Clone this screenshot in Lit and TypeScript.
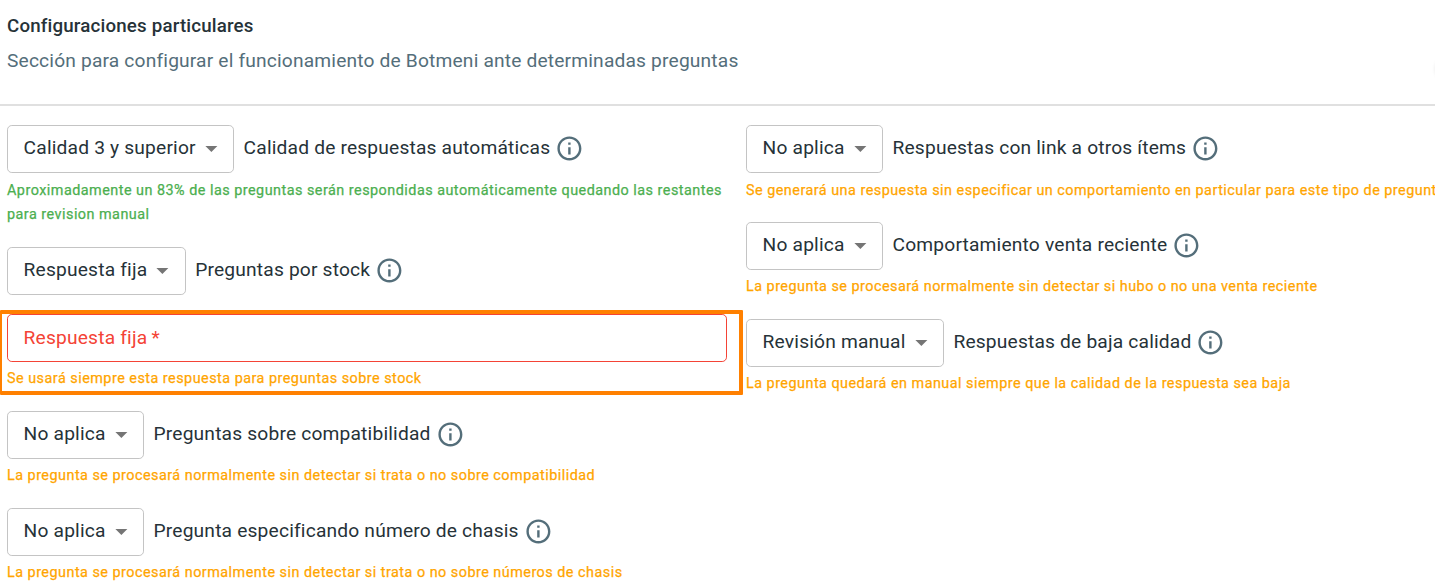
import { LitElement, html, css } from "lit";
import { customElement, property } from "lit/decorators.js";

@customElement("select-row")
class SelectRow extends LitElement {
  @property() value = "";
  @property() label = "";
  static styles = css`
    :host { display: flex; align-items: center; height: 48px; color: #263238; }
    .select {
      display: flex; align-items: center; box-sizing: border-box; height: 48px;
      border: 1px solid #c4c4c4; border-radius: 4.8px; padding: 0 7.6px 0 15.6px;
    }
    .text { line-height: 28.8px; margin-bottom: 1.6px; white-space: nowrap; }
    .arrow { width: 28.8px; height: 28.8px; margin: 0 0 1.5px 1.2px; fill: #757575; flex: none; }
    .label { margin-left: 9.3px; }
    .info { width: 28.8px; height: 28.8px; margin: 0 0 1.6px 5px; fill: #546e7a; flex: none; }
  `;
  render() {
    return html`
      <div class="select">
        <span class="text">${this.value}</span>
        <svg class="arrow" viewBox="0 0 24 24"><path d="M7 10l5 5 5-5z"></path></svg>
      </div>
      <span class="text label">${this.label}</span>
      <svg class="info" viewBox="0 0 24 24">
        <path d="M11 17h2v-6h-2v6zm1-15C6.48 2 2 6.48 2 12s4.48 10 10 10 10-4.48 10-10S17.52 2 12 2zm0 18c-4.41 0-8-3.59-8-8s3.59-8 8-8 8 3.59 8 8-3.59 8-8 8zM11 9h2V7h-2v2z"></path>
      </svg>
    `;
  }
}

@customElement("app-root")
class AppRoot extends LitElement {
  static styles = css`
    :host {
      display: block; box-sizing: border-box; width: 100%; height: 587px; overflow: hidden; position: relative;
      background: #fff; font-family: Roboto, sans-serif; font-size: 19.2px; letter-spacing: 0.18px;
    }
    .header { box-sizing: border-box; height: 106px; padding: 11px 7px 0; border-bottom: 2px solid #e0e0e0; }
    .title { font-size: 18.72px; font-weight: 500; line-height: 30px; color: #263238; letter-spacing: 0.18px; }
    .subtitle { line-height: 30px; margin-top: 5px; color: #546e7a; letter-spacing: 0.17px; }
    .edge {
      position: absolute; right: -25px; top: 57px; width: 24px; height: 24px;
      border-radius: 50%; box-shadow: 0 0 4px rgba(0, 0, 0, 0.15);
    }
    .columns { display: grid; grid-template-columns: 720px auto; column-gap: 19px; padding: 19px 0 0 7px; }
    .caption {
      margin-top: 5px; height: 24px; margin-bottom: 20px; white-space: nowrap;
      font-size: 14.4px; line-height: 24px; letter-spacing: 0.48px; font-weight: 400; color: #ffa500;
      -webkit-text-stroke: 0.25px currentColor;
    }
    .first { margin-top: 6px; margin-bottom: 19px; }
    .ok { color: #4caf50; height: 48px; margin-bottom: 20px; white-space: normal; }
    .highlight {
      box-sizing: border-box; width: 743px; height: 85px; margin: 15px 0 16px -7px;
      border: 4px solid #ff8000; border-left-width: 2px; border-radius: 1px; padding-left: 5px;
    }
    .field {
      box-sizing: border-box; width: 720px; height: 48px; border: 1px solid #f44336;
      border-radius: 4.8px; padding: 8px 15.6px; line-height: 30px; color: #f44336;
    }
    .star { margin-left: -0.8px; }
    .highlight .caption { margin: 5px 0 0; }
  `;
  render() {
    return html`
      <header class="header">
        <div class="title">Configuraciones particulares</div>
        <div class="subtitle">Sección para configurar el funcionamiento de Botmeni ante determinadas preguntas</div>
        <div class="edge"></div>
      </header>
      <div class="columns">
        <div>
          <select-row value="Calidad 3 y superior" label="Calidad de respuestas automáticas"></select-row>
          <div class="caption first ok">Aproximadamente un 83% de las preguntas serán respondidas automáticamente quedando las restantes para revision manual</div>
          <select-row value="Respuesta fija" label="Preguntas por stock"></select-row>
          <div class="highlight">
            <div class="field">Respuesta fija <span class="star">*</span></div>
            <div class="caption">Se usará siempre esta respuesta para preguntas sobre stock</div>
          </div>
          <select-row value="No aplica" label="Preguntas sobre compatibilidad"></select-row>
          <div class="caption">La pregunta se procesará normalmente sin detectar si trata o no sobre compatibilidad</div>
          <select-row value="No aplica" label="Pregunta especificando número de chasis"></select-row>
          <div class="caption">La pregunta se procesará normalmente sin detectar si trata o no sobre números de chasis</div>
        </div>
        <div>
          <select-row value="No aplica" label="Respuestas con link a otros ítems"></select-row>
          <div class="caption first">Se generará una respuesta sin especificar un comportamiento en particular para este tipo de pregunta</div>
          <select-row value="No aplica" label="Comportamiento venta reciente"></select-row>
          <div class="caption">La pregunta se procesará normalmente sin detectar si hubo o no una venta reciente</div>
          <select-row value="Revisión manual" label="Respuestas de baja calidad"></select-row>
          <div class="caption">La pregunta quedará en manual siempre que la calidad de la respuesta sea baja</div>
        </div>
      </div>
    `;
  }
}
